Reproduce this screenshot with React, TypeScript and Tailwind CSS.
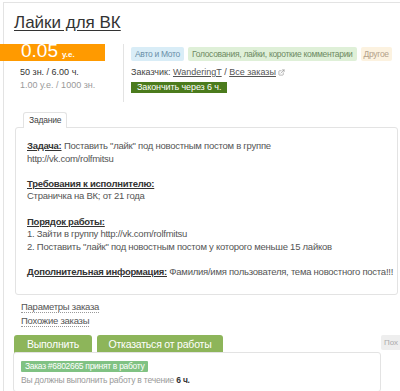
import { ExternalLink } from 'lucide-react';

const font = { fontFamily: '"Liberation Sans", Arial, sans-serif' };

function Heading({ children }: { children: React.ReactNode }) {
  return <span className="underline text-[#333] font-bold">{children}</span>;
}

export default function App() {
  return (
    <div className="w-[400px] h-[391px] overflow-hidden bg-white text-[#444] leading-none" style={font}>
      <div className="ml-[3px] mt-[2px] border-l border-t border-[#e3e3e3] h-[400px]">
        <h1 className="pl-[10px] pt-[10px] h-[41px] text-[17px] leading-[20px] text-[#333] underline underline-offset-2">
          Лайки для ВК
        </h1>

        <div className="flex h-[58px]">
          <div className="w-[124px] -ml-[4px] border-r border-[#e3e3e3] h-[58px] shrink-0">
            <div className="w-[105px] h-[17px] bg-[#ff9a00] text-white flex items-end pl-[21px]">
              <span className="text-[19px] leading-[20px]">0.05</span>
              <span className="text-[8px] ml-[4px] leading-[12px] font-bold">у.е.</span>
            </div>
            <div className="pl-[20px] mt-[6px] text-[9px] leading-[10px] text-[#333]">50 зн. / 6.00 ч.</div>
            <div className="pl-[20px] mt-[3px] text-[9px] leading-[10px] text-[#999]">1.00 у.е. / 1000 зн.</div>
          </div>
          <div className="pl-[7px] pt-[3px]">
            <div className="flex gap-[4px] text-[8.5px] leading-[14px] tracking-[-0.3px] whitespace-nowrap">
              <span className="bg-[#d9edf7] text-[#6a8fa8] px-[4px] rounded-[2px]">Авто и Мото</span>
              <span className="bg-[#dff0d8] text-[#6d8a62] px-[4px] rounded-[2px]">Голосования, лайки, короткие комментарии</span>
              <span className="bg-[#fcf2e0] text-[#b3a08a] px-[3px] rounded-[2px]">Другое</span>
            </div>
            <div className="mt-[6px] text-[9px] leading-[11px] text-[#444] flex items-center whitespace-nowrap">
              Заказчик:&nbsp;<span className="underline text-[#555]">WanderingT</span>&nbsp;/&nbsp;
              <span className="underline text-[#555]">Все заказы</span>
              <ExternalLink size={7} className="ml-[2px] text-[#888]" />
            </div>
            <div className="flex mt-[4px]">
              <div className="h-[11px] px-[6px] flex items-center bg-[#4b7b1d] text-white text-[9px] tracking-[-0.1px] whitespace-nowrap">
                Закончить через 6 ч.
              </div>
            </div>
          </div>
        </div>

        <div className="flex pl-[19px] mt-[9px]">
          <div className="border border-b-0 border-[#e3e3e3] rounded-t-[3px] px-[5px] text-[8.5px] tracking-[-0.2px] leading-[15px] text-[#444] bg-white relative top-[1px]">
            Задание
          </div>
        </div>
        <div className="ml-[11px] w-[383px] border border-[#e3e3e3] rounded-[3px] h-[168px] pl-[11px] pt-[12px] text-[9.5px] leading-[12.6px] tracking-[-0.25px] text-[#555]">
          <div className="mb-[12.6px]">
            <Heading>Задача:</Heading> Поставить "лайк" под новостным постом в группе
            <br />
            http://vk.com/rolfmitsu
          </div>
          <div className="mb-[12.6px]">
            <Heading>Требования к исполнителю:</Heading>
            <br />
            Страничка на ВК; от 21 года
          </div>
          <div className="mb-[12.6px]">
            <Heading>Порядок работы:</Heading>
            <br />
            1. Зайти в группу http://vk.com/rolfmitsu
            <br />
            2. Поставить "лайк" под новостным постом у которого меньше 15 лайков
          </div>
          <div className="whitespace-nowrap">
            <Heading>Дополнительная информация:</Heading> Фамилия/имя пользователя, тема новостного поста!!!
          </div>
        </div>

        <div className="pl-[17px] mt-[6px] text-[9.5px] leading-[12px] tracking-[-0.25px] text-[#555]">
          <div>
            <span className="border-b border-dotted border-[#999]">Параметры заказа</span>
          </div>
          <div className="mt-[2px]">
            <span className="border-b border-dotted border-[#999]">Похожие заказы</span>
          </div>
        </div>

        <div className="flex items-start mt-[8px] ml-[10px]">
          <div className="w-[78px] h-[22px] bg-[#8db55a] rounded-t-[3px] text-white text-[10.5px] tracking-[-0.2px] flex items-center justify-center pb-[4px]">
            Выполнить
          </div>
          <div className="w-[126px] h-[22px] ml-[5px] bg-[#8db55a] rounded-t-[3px] text-white text-[10.5px] tracking-[-0.2px] flex items-center justify-center pb-[4px]">
            Отказаться от работы
          </div>
          <div className="ml-auto w-[19px] h-[15px] bg-[#eeeeee] rounded-l-[2px] text-[8px] text-[#aaa] leading-[15px] pl-[3px] overflow-hidden">
            Пох
          </div>
        </div>
        <div className="relative -mt-[5px] ml-[9px] w-[368px] h-[40px] bg-white border border-[#e3e3e3] rounded-[3px] pl-[7px] pt-[8px]">
          <div className="flex">
            <span className="bg-[#80c283] text-white text-[8.5px] leading-[11px] tracking-[-0.3px] px-[4px] rounded-[1px]">
              Заказ #6802665 принят в работу
            </span>
          </div>
          <div className="mt-[3px] text-[8.5px] leading-[11px] tracking-[-0.2px] text-[#999]">
            Вы должны выполнить работу в течение <span className="text-[#333] font-bold">6 ч.</span>
          </div>
        </div>
      </div>
    </div>
  );
}
